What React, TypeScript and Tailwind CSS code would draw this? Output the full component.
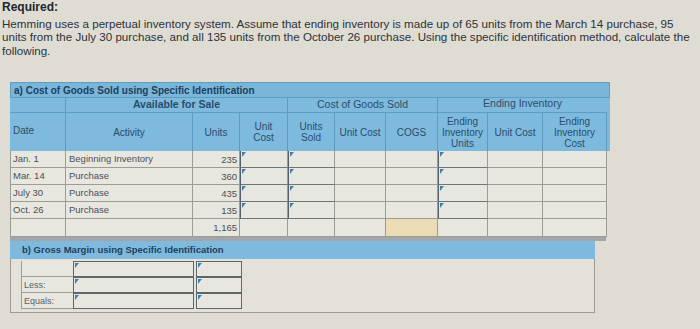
import React from "react";

const cols = [56, 127, 47, 48, 47, 51, 52, 50, 55, 64];

const rows = [
  { date: "Jan. 1", activity: "Beginning Inventory", units: "235" },
  { date: "Mar. 14", activity: "Purchase", units: "360" },
  { date: "July 30", activity: "Purchase", units: "435" },
  { date: "Oct. 26", activity: "Purchase", units: "135" },
];

const Flag = () => (
  <span className="absolute left-[1px] top-[1px] w-0 h-0 border-t-[5px] border-r-[4px] border-t-[#3f7fb0] border-r-transparent" />
);

const Cell = ({
  w,
  flag,
  input,
  orange,
  children,
  className = "",
}: {
  w: number;
  flag?: boolean;
  input?: boolean;
  orange?: boolean;
  children?: React.ReactNode;
  className?: string;
}) => (
  <div
    style={{ width: w }}
    className={`relative h-full border-r border-b border-[#9c9b94] ${
      orange ? "bg-[#ecdcb6]" : "bg-[#e8e7df]"
    } ${input ? "border-l border-l-[#5a6166] border-b-[#6d7378]" : ""} ${className}`}
  >
    {flag && <Flag />}
    {children}
  </div>
);

const App = () => {
  return (
    <div
      className="w-[700px] h-[329px] overflow-hidden bg-[#dfdcd4] text-[#2d3238]"
      style={{ fontFamily: '"Liberation Sans", Arial, sans-serif' }}
    >
      {/* Question text */}
      <div className="pl-[2px] pt-[1px] text-[11.6px] leading-[13.5px] whitespace-nowrap">
        <div className="font-bold text-[12px] text-[#22272c] mb-[2px]">Required:</div>
        <div>
          Hemming uses a perpetual inventory system. Assume that ending inventory is made up of 65 units from the March 14 purchase, 95
        </div>
        <div>
          units from the July 30 purchase, and all 135 units from the October 26 purchase. Using the specific identification method, calculate the
        </div>
        <div>following.</div>
      </div>

      {/* Table a */}
      <div className="ml-[10px] mt-[25px] w-[600px] text-[#2a4a63]">
        <div className="h-[16px] bg-[#79b6da] border border-[#5f9cc2] flex items-center pl-[3px] text-[10px] font-bold text-[#1f3f5c]">
          a) Cost of Goods Sold using Specific Identification
        </div>
        <div className="flex h-[15px] bg-[#7ebadd] text-[10.5px] font-bold text-[#2a4d6b]">
          <div style={{ width: cols[0] }} className="border-r border-b border-[#5f9cc2]" />
          <div
            style={{ width: cols[1] + cols[2] + cols[3] }}
            className="border-r border-b border-[#5f9cc2] flex items-center justify-center"
          >
            Available for Sale
          </div>
          <div
            style={{ width: cols[4] + cols[5] + cols[6] }}
            className="border-r border-b border-[#5f9cc2] flex items-center justify-center font-normal"
          >
            Cost of Goods Sold
          </div>
          <div
            style={{ width: cols[7] + cols[8] + cols[9] }}
            className="border-b border-[#5f9cc2] flex items-end justify-center font-normal"
          >
            Ending Inventory
          </div>
        </div>
        <div className="flex h-[38px] bg-[#7ebadd] text-[10px] leading-[11px] text-[#2a4d6b]">
          {[
            "Date",
            "Activity",
            "Units",
            "Unit\nCost",
            "Units\nSold",
            "Unit Cost",
            "COGS",
            "Ending\nInventory\nUnits",
            "Unit Cost",
            "Ending\nInventory\nCost",
          ].map((t, i) => (
            <div
              key={i}
              style={{ width: cols[i] }}
              className={`border-r border-[#5f9cc2] flex items-center whitespace-pre-line text-center ${
                i === 0 ? "justify-start pl-[3px] pb-[4px]" : "justify-center"
              }`}
            >
              {t}
            </div>
          ))}
        </div>

        {/* data rows */}
        <div className="text-[9.5px] text-[#4a4f55]">
          {rows.map((r, idx) => (
            <div key={idx} className="flex h-[17px]">
              <Cell w={cols[0]} className="border-l pl-[2px] leading-[16px]">
                {r.date}
              </Cell>
              <Cell w={cols[1]} className="pl-[3px] leading-[16px]">
                {r.activity}
              </Cell>
              <Cell w={cols[2]} className="text-right pr-[2px] leading-[18px]">
                {r.units}
              </Cell>
              <Cell w={cols[3]} input flag />
              <Cell w={cols[4]} input flag />
              <Cell w={cols[5]} />
              <Cell w={cols[6]} />
              <Cell w={cols[7]} input flag />
              <Cell w={cols[8]} />
              <Cell w={cols[9]} />
            </div>
          ))}
          <div className="flex h-[18px]">
            <Cell w={cols[0]} className="border-l" />
            <Cell w={cols[1]} />
            <Cell w={cols[2]} className="text-right pr-[2px] leading-[18px]">
              1,165
            </Cell>
            <Cell w={cols[3]} />
            <Cell w={cols[4]} />
            <Cell w={cols[5]} />
            <Cell w={cols[6]} orange />
            <Cell w={cols[7]} />
            <Cell w={cols[8]} />
            <Cell w={cols[9]} />
          </div>
        </div>
        <div className="h-[4px] bg-[#a3a6a8] w-[596px]" />
      </div>

      {/* Section b */}
      <div className="ml-[10px] w-[585px]">
        <div className="h-[18px] bg-[#7ebadd] flex items-center pl-[12px] text-[9.5px] font-bold text-[#1f3f5c]">
          b) Gross Margin using Specific Identification
        </div>
        <div className="h-[54px] border border-t-0 border-[#9c9b94] bg-[#e3e1da] pl-[10px] pt-[2px]">
          {["", "Less:", "Equals:"].map((label, i) => (
            <div key={i} className="flex h-[16px] text-[9px] text-[#5a5f64]">
              <div className="w-[52px] border-l border-b border-[#9c9b94] bg-[#e8e7df] pl-[2px] leading-[16px]">
                {label}
              </div>
              <div className="relative w-[121px] border border-[#5f666b] bg-[#e8e7df]">
                <Flag />
              </div>
              <div className="w-[2px]" />
              <div className="relative w-[46px] border border-[#5f666b] bg-[#e8e7df]">
                <Flag />
              </div>
            </div>
          ))}
        </div>
      </div>
    </div>
  );
};

export default App;
